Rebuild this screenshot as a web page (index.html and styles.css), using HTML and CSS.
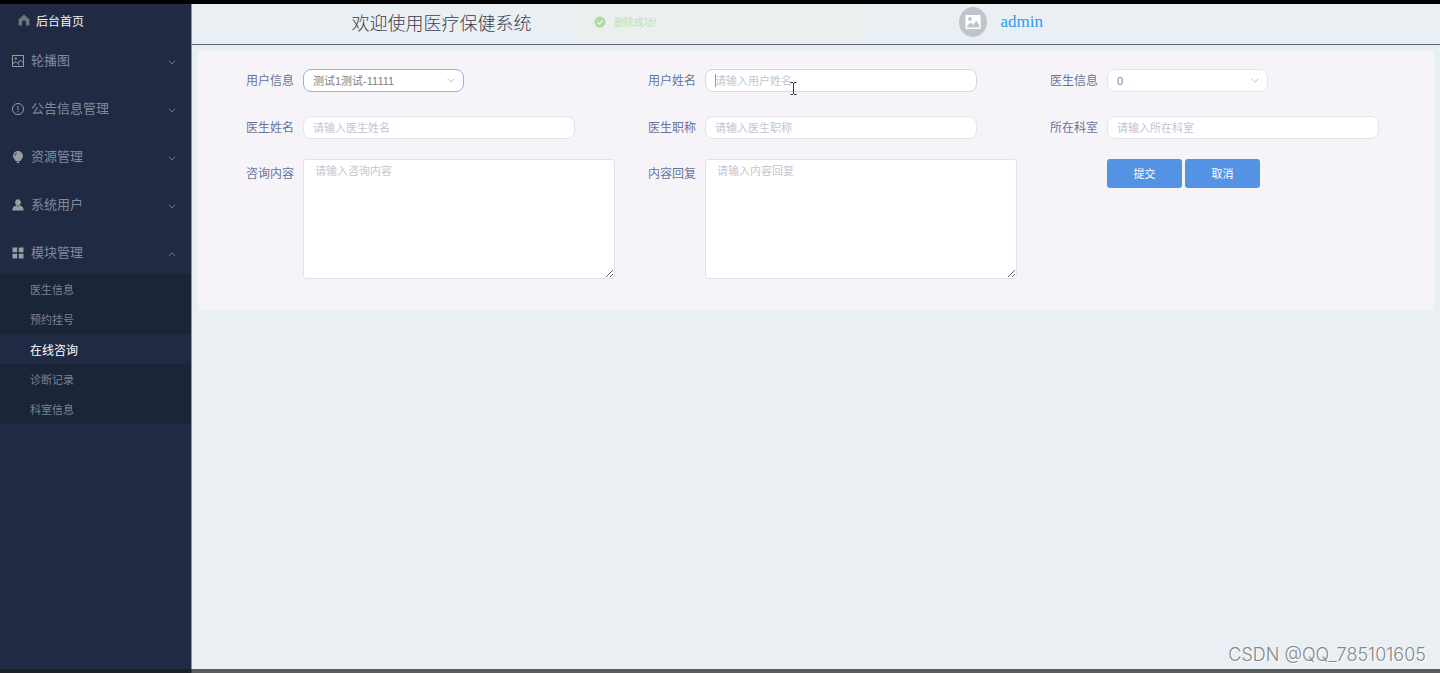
FILE: index.html
```html
<!DOCTYPE html>
<html lang="zh-CN">
<head>
<meta charset="utf-8">
<title>医疗保健系统</title>
<link rel="stylesheet" href="styles.css">
</head>
<body>
<div class="app">
  <aside class="sidebar">
    <a class="home" href="#">
      <svg class="icon" viewBox="0 0 12 12"><path fill="currentColor" d="M6 .5 11.5 5.5V11.5H8V8.500a2 2 0 0 0-4 0v3H.5V5.500z"/></svg>
      后台首页
    </a>
    <nav class="menu">
      <button class="item" type="button">
        <svg class="icon" viewBox="0 0 12 12" fill="none" stroke="currentColor"><path d="M.5 .5h11v11H.5zM.5 9 4 6.500l2 2L8.500 5l3 3M6 8.500 7 10"/><circle cx="3.700" cy="3.500" r=".8"/></svg>
        <span class="name">轮播图</span>
        <svg class="chevron" viewBox="0 0 8 5"><path d="M1 .8 4 4 7 .8"/></svg>
      </button>
      <button class="item" type="button">
        <svg class="icon" viewBox="0 0 12 12" fill="none" stroke="currentColor"><circle cx="6" cy="6" r="5.500"/><path d="M6 2.800v4.200M6 8v1.200"/></svg>
        <span class="name">公告信息管理</span>
        <svg class="chevron" viewBox="0 0 8 5"><path d="M1 .8 4 4 7 .8"/></svg>
      </button>
      <button class="item" type="button">
        <svg class="icon" viewBox="0 0 12 12"><path fill="currentColor" d="M6 0a5 4.800 0 0 1 5 4.800C11 7.500 9 8.500 8.300 10H3.700C3 8.500 1 7.500 1 4.800A5 4.800 0 0 1 6 0zM4.300 10.600h3.400L7 12H5z"/><path d="M2.800 4.800Q3 2.500 5 2" fill="none" stroke="#202a42" stroke-width=".8"/></svg>
        <span class="name">资源管理</span>
        <svg class="chevron" viewBox="0 0 8 5"><path d="M1 .8 4 4 7 .8"/></svg>
      </button>
      <button class="item" type="button">
        <svg class="icon" viewBox="0 0 12 12"><path fill="currentColor" d="M6 .3a3 3 0 0 1 1.600 5.500v.6Q11.500 7 11.700 11.500H.3Q.5 7 4.400 6.400v-.6A3 3 0 0 1 6 .3z"/><path fill="#202a42" d="M5.300 6.500h1.400L6 8.500z"/></svg>
        <span class="name">系统用户</span>
        <svg class="chevron" viewBox="0 0 8 5"><path d="M1 .8 4 4 7 .8"/></svg>
      </button>
      <button class="item" type="button" aria-expanded="true">
        <svg class="icon" viewBox="0 0 12 12"><path fill="currentColor" d="M.5 .5h4.700v4.700H.5zM6.800 .5h4.700v4.700H6.800zM.5 6.800h4.700v4.700H.5zM6.800 6.800h4.700v4.700H6.800z"/></svg>
        <span class="name">模块管理</span>
        <svg class="chevron" viewBox="0 0 8 5"><path d="M1 4 4 .8 7 4"/></svg>
      </button>
      <div class="submenu">
        <a href="#">医生信息</a>
        <a href="#">预约挂号</a>
        <a class="active" href="#">在线咨询</a>
        <a href="#">诊断记录</a>
        <a href="#">科室信息</a>
      </div>
    </nav>
  </aside>
  <div class="content">
    <header class="header">
      <h1 class="title">欢迎使用医疗保健系统</h1>
      <div class="user">
        <svg class="avatar" viewBox="0 0 28 30"><ellipse cx="14" cy="15" rx="14" ry="15" fill="#c0c4cc"/><path fill="#fff" fill-rule="evenodd" d="M6.500 8h15v14h-15zM8 20.500h12v-3L17.200 13.500 14.500 18 11.500 15.500 8 19z"/><circle cx="11" cy="12" r="1.900" fill="#c0c4cc"/></svg>
        <a href="#">admin</a>
      </div>
      <div class="toast" role="status">
        <svg class="tick" viewBox="0 0 12 12"><circle cx="6" cy="6" r="5.500" fill="#aedba0"/><path d="M3.300 6 5.300 8 8.800 4.400" fill="none" stroke="#f0f6ee" stroke-width="1.300"/></svg>
        删除成功!
      </div>
    </header>
    <main class="main">
      <form class="card">
        <div class="row spaced">
          <div class="field">
            <label for="user">用户信息</label>
            <div class="select current">
              <select id="user"><option>测试1测试-11111</option></select>
              <svg class="arrow" viewBox="0 0 8 5"><path d="M.5 .5 4 4.200 7.500 .5"/></svg>
            </div>
          </div>
          <div class="field">
            <label for="username">用户姓名</label>
            <div class="control">
              <input class="hovered" id="username" type="text" placeholder="请输入用户姓名">
              <span class="caret"></span>
              <svg class="pointer" viewBox="0 0 7 13"><path d="M.5 .5H3M4 .5h2.500M3.500 1v11M.5 12.500H3M4 12.500h2.500"/></svg>
            </div>
          </div>
          <div class="field">
            <label for="doctor">医生信息</label>
            <div class="select">
              <select id="doctor"><option>0</option></select>
              <svg class="arrow" viewBox="0 0 8 5"><path d="M.5 .5 4 4.200 7.500 .5"/></svg>
            </div>
          </div>
        </div>
        <div class="row">
          <div class="field">
            <label for="doctor-name">医生姓名</label>
            <div class="control"><input id="doctor-name" type="text" placeholder="请输入医生姓名"></div>
          </div>
          <div class="field">
            <label for="doctor-title">医生职称</label>
            <div class="control"><input id="doctor-title" type="text" placeholder="请输入医生职称"></div>
          </div>
          <div class="field">
            <label for="dept">所在科室</label>
            <div class="control"><input id="dept" type="text" placeholder="请输入所在科室"></div>
          </div>
        </div>
        <div class="row">
          <div class="field tall">
            <label for="question">咨询内容</label>
            <textarea id="question" placeholder="请输入咨询内容"></textarea>
          </div>
          <div class="field tall">
            <label for="reply">内容回复</label>
            <textarea id="reply" placeholder="请输入内容回复"></textarea>
          </div>
          <div class="actions">
            <button class="btn" type="submit">提交</button>
            <button class="btn" type="button">取消</button>
          </div>
        </div>
      </form>
    </main>
  </div>
  <div class="watermark">CSDN @QQ_785101605</div>
</div>
</body>
</html>
```

FILE: styles.css
```css
* {
  box-sizing: border-box;
}

body {
  margin: 0;
  background: #eaeff3;
  font-family: "Liberation Sans", "Noto Sans CJK SC", sans-serif;
  font-size: 12px;
}

a {
  color: inherit;
  text-decoration: none;
}

button,
input,
select,
textarea {
  font-family: inherit;
}

.app {
  position: relative;
  display: flex;
  min-height: 100vh;
  border-top: 4px solid #000;
}

.app::after {
  content: "";
  position: absolute;
  left: 0;
  right: 0;
  bottom: 0;
  height: 4px;
  background: rgba(28, 28, 28, 0.7);
}

/* Sidebar */
.sidebar {
  flex: none;
  width: 192px;
  background: #202a42;
  border-right: 1px solid #8b92a0;
}

.home {
  display: flex;
  align-items: center;
  gap: 6px;
  height: 30px;
  padding: 2px 18px 0;
  color: #f4f5f7;
}

.icon {
  flex: none;
  width: 12px;
  height: 12px;
  color: #9c9da2;
}

.home .icon {
  color: #70747f;
}

.item {
  display: flex;
  align-items: center;
  gap: 7px;
  width: 100%;
  height: 48px;
  padding: 6px 15px 0 12px;
  border: 0;
  background: none;
  color: #8089a0;
  font-size: 13px;
  text-align: left;
}

.name {
  flex: 1;
  padding-bottom: 3px;
}

.chevron {
  width: 8px;
  height: 5px;
  margin-top: 2px;
  fill: none;
  stroke: #6f7789;
}

.submenu {
  background: #1a2537;
}

.submenu a {
  display: flex;
  align-items: center;
  height: 30px;
  padding-left: 30px;
  color: #79829a;
  font-size: 11px;
}

.submenu .active {
  background: #202a42;
  color: #fff;
  font-size: 12px;
}

/* Header */
.content {
  flex: 1;
  min-width: 0;
}

.header {
  position: relative;
  display: grid;
  grid-template-columns: 40% 50%;
  align-items: center;
  height: 41px;
  padding-bottom: 4px;
  border-bottom: 1px solid #596273;
}

.title {
  margin: 0;
  color: #3b3f4d;
  font-family: KaiTi, "Noto Sans CJK SC", serif;
  font-size: 18px;
  font-weight: 300;
  line-height: 22px;
  text-align: center;
}

.user {
  display: flex;
  align-items: center;
  justify-content: center;
  gap: 13px;
  padding-right: 4px;
  color: #2d9bf0;
  font-family: "Liberation Serif", serif;
  font-size: 17px;
}

.avatar {
  width: 28px;
  height: 30px;
}

.toast {
  position: absolute;
  top: 0;
  left: 31%;
  display: flex;
  align-items: center;
  gap: 8px;
  width: 285px;
  height: 35px;
  padding-left: 15px;
  background: #ebf0ee;
  color: #bfe0b6;
  font-size: 10px;
}

.tick {
  width: 12px;
  height: 12px;
}

/* Form */
.main {
  padding: 6px;
}

.card {
  display: grid;
  row-gap: 20px;
  padding: 18px 15px 31px;
  background: #f6f4f8;
}

.row {
  display: grid;
  grid-template-columns: repeat(3, 1fr);
}

.spaced {
  padding-bottom: 4px;
}

.field {
  display: flex;
  align-items: center;
  gap: 9px;
}

.field label {
  flex: none;
  width: 81px;
  color: #66749a;
  line-height: 18px;
  text-align: right;
}

.control {
  position: relative;
  width: 272px;
}

.select {
  position: relative;
  width: 161px;
}

.control input,
.select select {
  display: block;
  width: 100%;
  height: 23px;
  padding: 0 9px;
  border: 1px solid #e3e5ec;
  border-radius: 8px;
  outline: none;
  appearance: none;
  background: #fff;
  color: #85817f;
  font-size: 11px;
}

.control .hovered {
  border-color: #cfd9ea;
}

.select.current select {
  border-color: #79bbf5;
}

.field ::placeholder {
  color: #c3c6d0;
}

.arrow {
  position: absolute;
  top: 9px;
  right: 9px;
  width: 8px;
  height: 5px;
  fill: none;
  stroke: #c0c4cc;
}

.caret {
  position: absolute;
  top: 5px;
  left: 10px;
  width: 1px;
  height: 13px;
  background: #999;
}

.pointer {
  position: absolute;
  top: 13px;
  left: 85px;
  width: 7px;
  height: 13px;
  fill: none;
  stroke: #333;
}

.tall {
  align-items: flex-start;
}

.tall label {
  padding-top: 6px;
}

.field textarea {
  display: block;
  width: 312px;
  height: 120px;
  padding: 3px 11px;
  border: 1px solid #e0e3ea;
  border-radius: 3px;
  outline: none;
  background: #fff;
  font-size: 11px;
  line-height: 16px;
  resize: both;
}

.actions {
  display: flex;
  align-items: flex-start;
  gap: 3px;
  padding-left: 90px;
}

.btn {
  width: 75px;
  height: 29px;
  padding: 0 0 2px;
  border: 0;
  border-radius: 3px;
  background: #5493e4;
  color: #fff;
  font-size: 11px;
}

.watermark {
  position: absolute;
  right: 14px;
  bottom: 7px;
  color: #85898d;
  font-family: Inter, "Liberation Sans", sans-serif;
  font-size: 18px;
  font-weight: 300;
  line-height: 22px;
  text-shadow: 1px 1px 0 #fff;
}
```
